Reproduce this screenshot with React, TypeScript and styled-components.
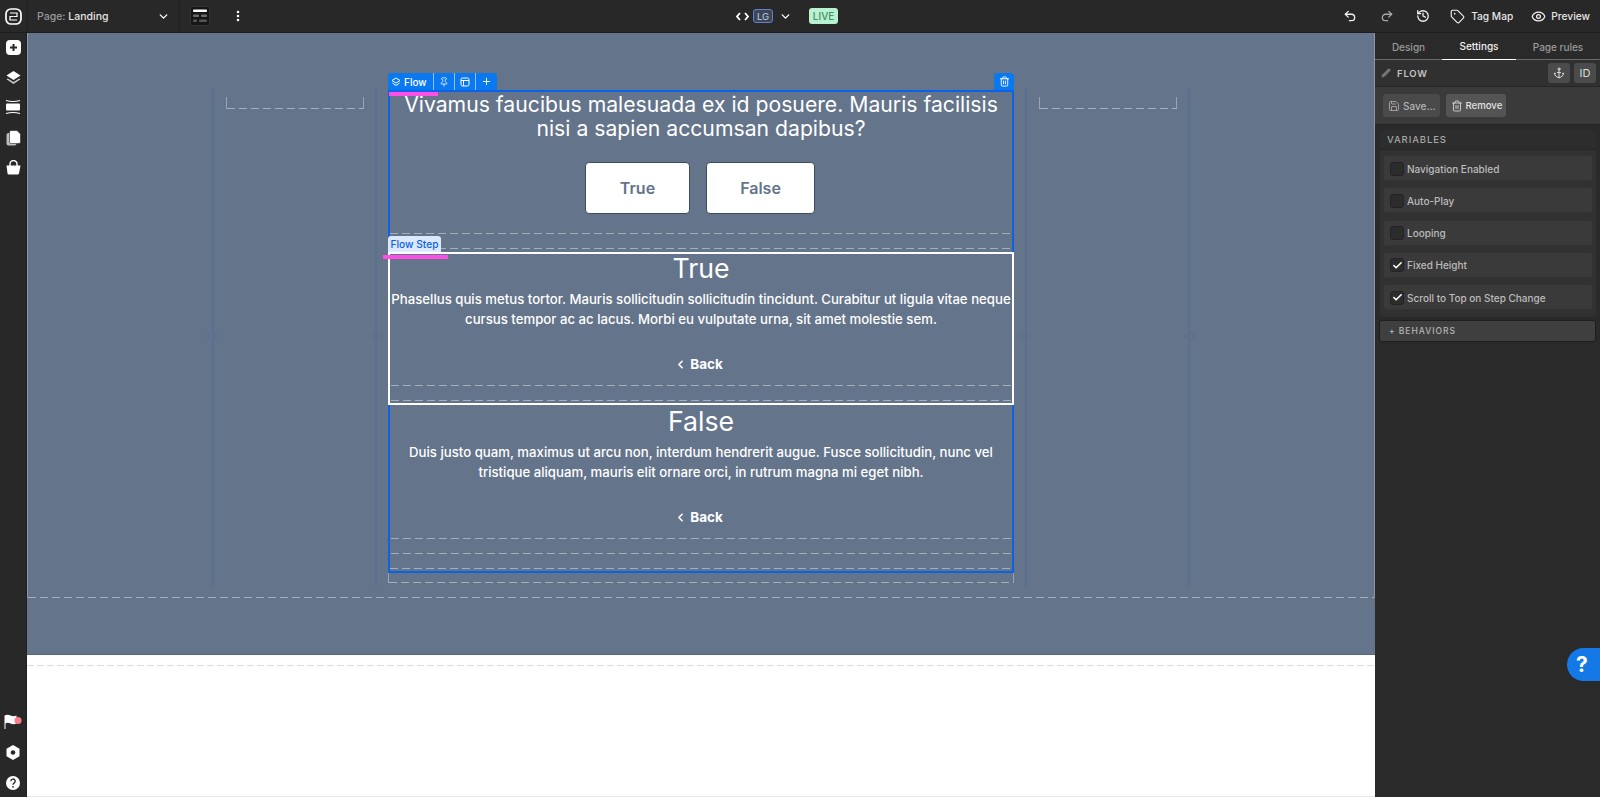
import styled, { createGlobalStyle, css } from 'styled-components'
import {
  Anchor,
  Check,
  ChevronDown,
  ChevronLeft,
  EllipsisVertical,
  Eye,
  History,
  Pencil,
  Pin,
  Plus,
  Redo2,
  Save,
  Tag,
  Trash2,
  Undo2,
} from 'lucide-react'

const GlobalStyle = createGlobalStyle`
  html, body {
    margin: 0;
    padding: 0;
    background: #fff;
  }
  * {
    box-sizing: border-box;
  }
  body {
    font-family: Inter, "Liberation Sans", sans-serif;
    overflow: hidden;
  }
`

const dashes = css`
  background-image: repeating-linear-gradient(
    90deg,
    rgba(255, 255, 255, 0.42) 0 8px,
    transparent 8px 12px
  );
  background-size: 100% 1px;
  background-repeat: no-repeat;
`

const Shell = styled.div`
  position: relative;
  width: 1600px;
  height: 797px;
  display: flex;
  flex-direction: column;
  overflow: hidden;
`

/* top bar */
const TopBar = styled.header`
  height: 33px;
  flex: none;
  display: flex;
  align-items: center;
  background: #282828;
  border-bottom: 1px solid #1d1d1d;
  color: #fff;
`

const LogoCell = styled.div`
  width: 28px;
  height: 100%;
  display: flex;
  align-items: center;
  justify-content: center;
  border-right: 1px solid #222;
`

const PageSelect = styled.div`
  width: 152px;
  height: 100%;
  padding: 0 9px;
  display: flex;
  align-items: center;
  justify-content: space-between;
  font-size: 10.5px;
  font-weight: 500;
  border-right: 1px solid #222;
  span {
    color: #9a9a9a;
  }
  b {
    color: #e4e4e4;
    font-weight: 500;
  }
`

const LayoutCell = styled.div`
  width: 33px;
  display: flex;
  align-items: center;
  padding-left: 10px;
`

const Kebab = styled.div`
  display: flex;
  margin-left: 18px;
`

const CenterTools = styled.div`
  margin-left: 491px;
  display: flex;
  align-items: center;
`

const CodeMark = styled.span`
  display: flex;
`

const SizeBadge = styled.span`
  margin-left: 4px;
  width: 20px;
  height: 14px;
  display: flex;
  align-items: center;
  justify-content: center;
  font-size: 9.5px;
  font-weight: 500;
  color: #a9bbd8;
  background: #3c4656;
  border: 1px solid #5c85c4;
  border-radius: 3px;
`

const CenterChevron = styled.span`
  display: flex;
  margin-left: 6px;
`

const LiveBadge = styled.span`
  margin-left: 17px;
  width: 29px;
  height: 16px;
  display: flex;
  align-items: center;
  justify-content: center;
  font-size: 10px;
  font-weight: 500;
  color: #478f66;
  background: #b9f2d0;
  border-radius: 3px;
`

const RightTools = styled.div`
  margin-left: auto;
  padding-right: 10px;
  display: flex;
  align-items: center;
  font-size: 10.2px;
  font-weight: 500;
  color: #e6e6e6;
`

const ToolIcon = styled.span<{ $gap: number; $dim?: boolean }>`
  display: flex;
  margin-right: ${(p) => p.$gap}px;
  color: ${(p) => (p.$dim ? '#a8a8a8' : '#f2f2f2')};
`

const ToolLabel = styled.span<{ $gap: number }>`
  margin-right: ${(p) => p.$gap}px;
`

/* body */
const Body = styled.div`
  flex: 1;
  min-height: 0;
  display: flex;
`

const Rail = styled.nav`
  width: 27px;
  flex: none;
  display: flex;
  flex-direction: column;
  align-items: center;
  padding: 7px 0 7px;
  background: #282828;
  border-right: 1px solid #1f1f1f;
`

const RailGroup = styled.div`
  display: flex;
  flex-direction: column;
  align-items: center;
  gap: 14.5px;
`

const RailBottom = styled(RailGroup)`
  margin-top: auto;
  gap: 16px;
`

const Main = styled.main`
  flex: 1;
  min-width: 0;
  display: flex;
  flex-direction: column;
`

const Canvas = styled.div`
  height: 622px;
  flex: none;
  background: #64748b;
  border-bottom: 1px solid #566579;
`

const Section = styled.section`
  height: 565px;
  padding: 55px 0 0 184px;
  display: flex;
  align-items: flex-start;
  ${dashes}
  background-position: left bottom;
  border-left: 1px solid rgba(255, 255, 255, 0.25);
  border-right: 1px solid rgba(255, 255, 255, 0.25);
`

const SideColumn = styled.div`
  position: relative;
  width: 165px;
  height: 499px;
  flex: none;
  padding: 9px 11px 0 12px;
  border-left: 2px solid #5a7090;
  border-right: 2px solid #5a7090;
`

const Bracket = styled.div`
  height: 12px;
  ${dashes}
  background-position: left bottom;
  border-left: 1px solid rgba(255, 255, 255, 0.35);
  border-right: 1px solid rgba(255, 255, 255, 0.35);
`

const Handle = styled.i<{ $side: 'left' | 'right' }>`
  position: absolute;
  top: 244px;
  ${(p) => p.$side}: -6px;
  width: 8px;
  height: 8px;
  border: 1px solid #5a7090;
  transform: rotate(45deg);
`

const Flow = styled.div`
  position: relative;
  width: 626px;
  height: 483px;
  flex: none;
  margin: 2px 11px 0;
  border: 2px solid #0b62e6;
  color: #fff;
  text-align: center;
`

const FlowTabs = styled.div`
  position: absolute;
  top: -19px;
  left: -2px;
  height: 17px;
  display: flex;
  align-items: center;
  background: #0a78ee;
  border-radius: 3px 3px 0 0;
  color: #fff;
`

const FlowTab = styled.span<{ $wide?: boolean }>`
  height: 100%;
  padding: ${(p) => (p.$wide ? '0 6px 0 3px' : '0 5px')};
  display: flex;
  align-items: center;
  gap: 3px;
  font-size: 10px;
  font-weight: 500;
  & + & {
    border-left: 1px solid #8fc2f8;
  }
`

const DeleteTab = styled.span`
  position: absolute;
  top: -19px;
  right: -2px;
  width: 20px;
  height: 17px;
  display: flex;
  align-items: center;
  justify-content: center;
  background: #0a78ee;
  border-radius: 3px 3px 0 0;
  color: #fff;
`

const PinkMark = styled.i<{ $left: number; $top: number; $width: number }>`
  position: absolute;
  left: ${(p) => p.$left}px;
  top: ${(p) => p.$top}px;
  width: ${(p) => p.$width}px;
  height: 4px;
  background: #ff4fe6;
`

const Question = styled.div`
  height: 160px;
`

const Heading = styled.h2`
  margin: 0;
  font-size: 21.2px;
  font-weight: 400;
  line-height: 24px;
`

const Choices = styled.div`
  margin-top: 22px;
  display: flex;
  justify-content: center;
  gap: 16px;
  padding-right: 2px;
`

const Choice = styled.button<{ $width: number }>`
  width: ${(p) => p.$width}px;
  height: 52px;
  background: #fff;
  border: 1px solid #3f4a5c;
  border-radius: 4px;
  color: #64748b;
  font-family: inherit;
  font-size: 16px;
  font-weight: 600;
`

const DropLine = styled.div<{ $top: number }>`
  margin-top: ${(p) => p.$top}px;
  height: 1px;
  ${dashes}
`

const Step = styled.article<{ $active?: boolean }>`
  position: relative;
  height: 153px;
  border: 2px solid ${(p) => (p.$active ? '#fff' : 'transparent')};
  margin: 0 -2px;
  padding: 0 1px;
`

const StepTag = styled.span`
  position: absolute;
  top: -18px;
  left: -2px;
  width: 53px;
  height: 16px;
  display: flex;
  align-items: center;
  justify-content: center;
  background: #dbe8fd;
  border-radius: 3px 3px 0 0;
  color: #0b62e6;
  font-size: 10.2px;
  font-weight: 500;
`

const StepTitle = styled.h3`
  margin: 0;
  font-size: 26.7px;
  font-weight: 400;
  line-height: 28px;
`

const StepText = styled.p`
  margin: 8px 0 0;
  font-size: 13.2px;
  font-weight: 500;
  line-height: 19.5px;
`

const BackLink = styled.div`
  margin-top: 25px;
  padding-right: 5px;
  display: flex;
  align-items: center;
  justify-content: center;
  gap: 3px;
  font-size: 13.5px;
  font-weight: 700;
  line-height: 20px;
`

const FlowBottom = styled.div`
  position: absolute;
  left: 0;
  right: 0;
  bottom: 2px;
  height: 1px;
  ${dashes}
`

const OuterBracket = styled.div`
  position: absolute;
  left: -2px;
  right: -2px;
  top: 481px;
  height: 10px;
  ${dashes}
  background-position: left bottom;
  border-left: 1px solid rgba(255, 255, 255, 0.35);
  border-right: 1px solid rgba(255, 255, 255, 0.35);
`

const WhiteArea = styled.div`
  flex: 1;
  padding-top: 10px;
  background: #fff;
  border-bottom: 1px solid #e8e8e8;
`

const WhiteGuide = styled.div`
  height: 1px;
  background-image: repeating-linear-gradient(90deg, #dcdcdc 0 7px, transparent 7px 10px);
`

/* right panel */
const Panel = styled.aside`
  width: 225px;
  flex: none;
  background: #2a2a2a;
  color: #c8c8c8;
`

const Tabs = styled.div`
  height: 27px;
  display: grid;
  grid-template-columns: 67px 74px 84px;
  border-bottom: 1px solid #6a6a6a;
`

const PanelTab = styled.div<{ $active?: boolean }>`
  display: flex;
  align-items: center;
  justify-content: center;
  font-size: 10px;
  font-weight: 500;
  color: ${(p) => (p.$active ? '#f0f0f0' : '#9b9b9b')};
  border-bottom: ${(p) => (p.$active ? '1px solid #fff' : '0')};
  margin-bottom: -1px;
`

const ElementRow = styled.div`
  height: 27px;
  padding: 0 4px 0 6px;
  display: flex;
  align-items: center;
  background: #303030;
  border-bottom: 1px solid #262626;
`

const ElementName = styled.span`
  margin-left: 6px;
  font-size: 9.5px;
  font-weight: 600;
  letter-spacing: 0.8px;
  color: #c4c4c4;
`

const SquareButton = styled.span<{ $first?: boolean }>`
  width: 22px;
  height: 20px;
  margin-left: ${(p) => (p.$first ? 'auto' : '4px')};
  display: flex;
  align-items: center;
  justify-content: center;
  border-radius: 3px;
  background: #4b4b4b;
  color: #dcdcdc;
  font-size: 11px;
`

const ActionRow = styled.div`
  height: 38px;
  padding: 0 8px;
  display: flex;
  align-items: center;
  gap: 6px;
  background: #3a3a3a;
  border-bottom: 1px solid #242424;
`

const ActionButton = styled.span<{ $strong?: boolean }>`
  height: 23px;
  padding: 0 4px 0 5px;
  display: flex;
  align-items: center;
  gap: 3px;
  border-radius: 3px;
  background: ${(p) => (p.$strong ? '#545454' : '#4a4a4a')};
  color: ${(p) => (p.$strong ? '#e2e2e2' : '#b4b4b4')};
  font-size: ${(p) => (p.$strong ? '9.6px' : '10px')};
  font-weight: 500;
`

const VariablesCard = styled.section`
  margin: 5px 4px 0 5px;
  height: 187px;
  border-radius: 3px;
  background: #313131;
`

const CardTitle = styled.div`
  height: 20px;
  padding: 0 7px;
  display: flex;
  align-items: center;
  background: #2d2d2d;
  border-bottom: 1px solid #272727;
  border-radius: 3px 3px 0 0;
  font-size: 9.5px;
  font-weight: 500;
  letter-spacing: 0.9px;
  color: #a6a6a6;
`

const VariableList = styled.div`
  padding: 5px 3px 0;
  display: flex;
  flex-direction: column;
  gap: 6.25px;
`

const VariableRow = styled.label`
  height: 26px;
  padding: 1px 6px 0;
  display: flex;
  align-items: center;
  gap: 3px;
  background: #3a3a3a;
  border: 1px solid #333;
  border-radius: 3px;
  font-size: 10px;
  font-weight: 500;
  color: #bcbcbc;
`

const Box = styled.span`
  width: 14px;
  height: 14px;
  display: flex;
  align-items: center;
  justify-content: center;
  background: #2c2c2c;
  border: 1px solid #232323;
  border-radius: 3px;
  color: #fff;
`

const Behaviors = styled.div`
  margin: 3px 4px 0 4px;
  height: 22px;
  padding: 0 9px;
  display: flex;
  align-items: center;
  gap: 3px;
  background: #3f3f3f;
  border: 1px solid #1e1e1e;
  border-radius: 3px;
  font-size: 8.5px;
  font-weight: 500;
  letter-spacing: 1px;
  color: #b5b5b5;
`

const HelpBubble = styled.div`
  position: absolute;
  right: 0;
  top: 648px;
  width: 33px;
  height: 33px;
  padding-right: 3px;
  display: flex;
  align-items: center;
  justify-content: center;
  background: #1479e6;
  border-radius: 17px 0 0 17px;
  color: #fff;
  font-size: 21px;
  font-weight: 700;
`

const Logo = () => (
  <svg width="17" height="17" viewBox="0 0 17 17" fill="none" stroke="#fff">
    <rect x="1" y="1" width="15" height="15" rx="5" strokeWidth="1.7" />
    <path d="M5 5h7v3.500H8.500" strokeWidth="1.200" />
    <path d="M12 12H5V8.500h3.500" strokeWidth="1.200" />
  </svg>
)

const LayoutIcon = () => (
  <svg width="20" height="20" viewBox="0 0 20 20">
    <rect x="0.500" y="0.500" width="19" height="19" rx="2.500" fill="#161616" stroke="#333" />
    <rect x="3" y="3.500" width="14" height="2.500" rx="1" fill="#fff" />
    <rect x="3" y="8.500" width="6" height="2.500" rx="1" fill="#6c6c6c" />
    <rect x="11" y="8.500" width="6" height="2.500" rx="1" fill="#6c6c6c" />
    <rect x="3" y="13.500" width="4" height="2.500" rx="1" fill="#555" />
    <rect x="9" y="13.500" width="8" height="2.500" rx="1" fill="#555" />
  </svg>
)

const AddIcon = () => (
  <svg width="15" height="15" viewBox="0 0 15 15">
    <rect width="15" height="15" rx="4" fill="#fff" />
    <path d="M7.500 4v7M4 7.500h7" stroke="#282828" strokeWidth="2" />
  </svg>
)

const LayersIcon = () => (
  <svg width="15" height="15" viewBox="0 0 15 15" fill="#fff">
    <path d="M7.500 1 14.500 5.500 7.500 10 .5 5.500z" />
    <path d="M1.800 8.400 7.500 12l5.700-3.600 1.300.9-7 4.700-7-4.700z" fill="#c9c9c9" />
  </svg>
)

const SectionsIcon = () => (
  <svg width="16" height="16" viewBox="0 0 16 16" fill="none">
    <rect x="1" y="4.500" width="14" height="7" rx="1" fill="#fff" />
    <path d="M1 1.500q7 2 14 0M1 14.500q7-2 14 0" stroke="#fff" strokeWidth="1.100" />
  </svg>
)

const PagesIcon = () => (
  <svg width="15" height="16" viewBox="0 0 15 16">
    <rect x="0.500" y="3" width="10" height="12.500" rx="2" fill="#bcbcbc" />
    <path d="M5 .5h6l3.500 3.500v8a1.500 1.500 0 0 1-1.500 1.500H5A1.500 1.500 0 0 1 3.500 12V2A1.500 1.500 0 0 1 5 .5z" fill="#fff" stroke="#282828" strokeWidth=".6" />
  </svg>
)

const BagIcon = () => (
  <svg width="15" height="15" viewBox="0 0 15 15" fill="none">
    <path d="M.5 5.500h14l-1.500 8a1.500 1.500 0 0 1-1.500 1h-8.500a1.500 1.500 0 0 1-1.500-1z" fill="#fff" />
    <path d="M4 6V4a3.500 3.500 0 0 1 7 0v2" stroke="#fff" strokeWidth="1.400" />
  </svg>
)

const FlagIcon = () => (
  <svg width="19" height="15" viewBox="0 0 19 15">
    <path d="M.5 1.500q3-1.500 6 0t6 0v8q-3 1.500-6 0t-5 0V15H.5z" fill="#fff" />
    <circle cx="14" cy="6.500" r="3.500" fill="#ff7c8a" />
  </svg>
)

const GearIcon = () => (
  <svg width="14" height="15" viewBox="0 0 14 15">
    <path d="M7 0l6.500 3.750v7.500L7 15 .5 11.250v-7.500z" fill="#fff" />
    <circle cx="7" cy="7.500" r="2.300" fill="#282828" />
  </svg>
)

const HelpIcon = () => (
  <svg width="14" height="14" viewBox="0 0 14 14">
    <circle cx="7" cy="7" r="7" fill="#fff" />
    <path d="M4.800 5.300a2.200 2.200 0 1 1 3.300 1.900c-.7.400-1.100.8-1.100 1.500" fill="none" stroke="#282828" strokeWidth="1.400" />
    <circle cx="7" cy="10.800" r=".9" fill="#282828" />
  </svg>
)

const StackIcon = () => (
  <svg width="10" height="10" viewBox="0 0 10 10" fill="none" stroke="#fff" strokeWidth="1">
    <path d="M5 1 9 3.500 5 6 1 3.500z" />
    <path d="M1.500 6 5 8.500 8.500 6" />
  </svg>
)

const WindowIcon = () => (
  <svg width="10" height="10" viewBox="0 0 10 10" fill="none" stroke="#fff" strokeWidth="1">
    <rect x="1" y="1" width="8" height="8" rx="1.500" />
    <path d="M1 3.500h8M3.500 3.500V9" />
  </svg>
)

const CodeIcon = () => (
  <svg width="13" height="9" viewBox="0 0 13 9" fill="none" stroke="#fff" strokeWidth="1.800">
    <path d="M4 1 1 4.500 4 8M9 1l3 3.500L9 8" />
  </svg>
)

const variables = [
  { label: 'Navigation Enabled', checked: false },
  { label: 'Auto-Play', checked: false },
  { label: 'Looping', checked: false },
  { label: 'Fixed Height', checked: true },
  { label: 'Scroll to Top on Step Change', checked: true },
]

const App = () => {
  return (
    <Shell>
      <GlobalStyle />
      <TopBar>
        <LogoCell>
          <Logo />
        </LogoCell>
        <PageSelect>
          <div>
            <span>Page: </span>
            <b>Landing</b>
          </div>
          <ChevronDown size={13} strokeWidth={2.5} />
        </PageSelect>
        <LayoutCell>
          <LayoutIcon />
        </LayoutCell>
        <Kebab>
          <EllipsisVertical size={14} strokeWidth={2.4} />
        </Kebab>
        <CenterTools>
          <CodeMark>
            <CodeIcon />
          </CodeMark>
          <SizeBadge>LG</SizeBadge>
          <CenterChevron>
            <ChevronDown size={13} strokeWidth={2.5} />
          </CenterChevron>
          <LiveBadge>LIVE</LiveBadge>
        </CenterTools>
        <RightTools>
          <ToolIcon $gap={23}>
            <Undo2 size={14} strokeWidth={2.2} />
          </ToolIcon>
          <ToolIcon $gap={22} $dim>
            <Redo2 size={14} strokeWidth={2.2} />
          </ToolIcon>
          <ToolIcon $gap={20}>
            <History size={14} strokeWidth={2.2} />
          </ToolIcon>
          <ToolIcon $gap={6}>
            <Tag size={15} strokeWidth={1.8} />
          </ToolIcon>
          <ToolLabel $gap={18}>Tag Map</ToolLabel>
          <ToolIcon $gap={5}>
            <Eye size={15} strokeWidth={2} />
          </ToolIcon>
          <ToolLabel $gap={0}>Preview</ToolLabel>
        </RightTools>
      </TopBar>
      <Body>
        <Rail>
          <RailGroup>
            <AddIcon />
            <LayersIcon />
            <SectionsIcon />
            <PagesIcon />
            <BagIcon />
          </RailGroup>
          <RailBottom>
            <FlagIcon />
            <GearIcon />
            <HelpIcon />
          </RailBottom>
        </Rail>
        <Main>
          <Canvas>
            <Section>
              <SideColumn>
                <Bracket />
                <Handle $side="left" />
                <Handle $side="right" />
              </SideColumn>
              <Flow>
                <FlowTabs>
                  <FlowTab $wide>
                    <StackIcon />
                    Flow
                  </FlowTab>
                  <FlowTab>
                    <Pin size={10} strokeWidth={1.8} />
                  </FlowTab>
                  <FlowTab>
                    <WindowIcon />
                  </FlowTab>
                  <FlowTab>
                    <Plus size={11} strokeWidth={2} />
                  </FlowTab>
                </FlowTabs>
                <DeleteTab>
                  <Trash2 size={11} strokeWidth={2} />
                </DeleteTab>
                <PinkMark $left={-1} $top={0} $width={49} />
                <Question>
                  <Heading>
                    Vivamus faucibus malesuada ex id posuere. Mauris facilisis
                    <br />
                    nisi a sapien accumsan dapibus?
                  </Heading>
                  <Choices>
                    <Choice $width={105}>True</Choice>
                    <Choice $width={109}>False</Choice>
                  </Choices>
                  <DropLine $top={19} />
                  <DropLine $top={14} />
                </Question>
                <Step $active>
                  <StepTag>Flow Step</StepTag>
                  <PinkMark $left={-7} $top={1} $width={65} />
                  <StepTitle>True</StepTitle>
                  <StepText>
                    Phasellus quis metus tortor. Mauris sollicitudin sollicitudin tincidunt. Curabitur ut ligula vitae neque
                    <br />
                    cursus tempor ac ac lacus. Morbi eu vulputate urna, sit amet molestie sem.
                  </StepText>
                  <BackLink>
                    <ChevronLeft size={13} strokeWidth={3} />
                    Back
                  </BackLink>
                  <DropLine $top={11} />
                  <DropLine $top={14} />
                </Step>
                <Step>
                  <StepTitle>False</StepTitle>
                  <StepText>
                    Duis justo quam, maximus ut arcu non, interdum hendrerit augue. Fusce sollicitudin, nunc vel
                    <br />
                    tristique aliquam, mauris elit ornare orci, in rutrum magna mi eget nibh.
                  </StepText>
                  <BackLink>
                    <ChevronLeft size={13} strokeWidth={3} />
                    Back
                  </BackLink>
                  <DropLine $top={11} />
                  <DropLine $top={14} />
                </Step>
                <FlowBottom />
                <OuterBracket />
              </Flow>
              <SideColumn>
                <Bracket />
                <Handle $side="left" />
                <Handle $side="right" />
              </SideColumn>
            </Section>
          </Canvas>
          <WhiteArea>
            <WhiteGuide />
          </WhiteArea>
        </Main>
        <Panel>
          <Tabs>
            <PanelTab>Design</PanelTab>
            <PanelTab $active>Settings</PanelTab>
            <PanelTab>Page rules</PanelTab>
          </Tabs>
          <ElementRow>
            <Pencil size={10} color="#777" fill="#777" />
            <ElementName>FLOW</ElementName>
            <SquareButton $first>
              <Anchor size={12} strokeWidth={2} />
            </SquareButton>
            <SquareButton>ID</SquareButton>
          </ElementRow>
          <ActionRow>
            <ActionButton>
              <Save size={12} strokeWidth={1.6} />
              Save...
            </ActionButton>
            <ActionButton $strong>
              <Trash2 size={12} strokeWidth={1.6} />
              Remove
            </ActionButton>
          </ActionRow>
          <VariablesCard>
            <CardTitle>VARIABLES</CardTitle>
            <VariableList>
              {variables.map((item) => (
                <VariableRow key={item.label}>
                  <Box>{item.checked && <Check size={11} strokeWidth={3.5} />}</Box>
                  {item.label}
                </VariableRow>
              ))}
            </VariableList>
          </VariablesCard>
          <Behaviors>
            <span>+</span> BEHAVIORS
          </Behaviors>
        </Panel>
      </Body>
      <HelpBubble>?</HelpBubble>
    </Shell>
  )
}

export default App
